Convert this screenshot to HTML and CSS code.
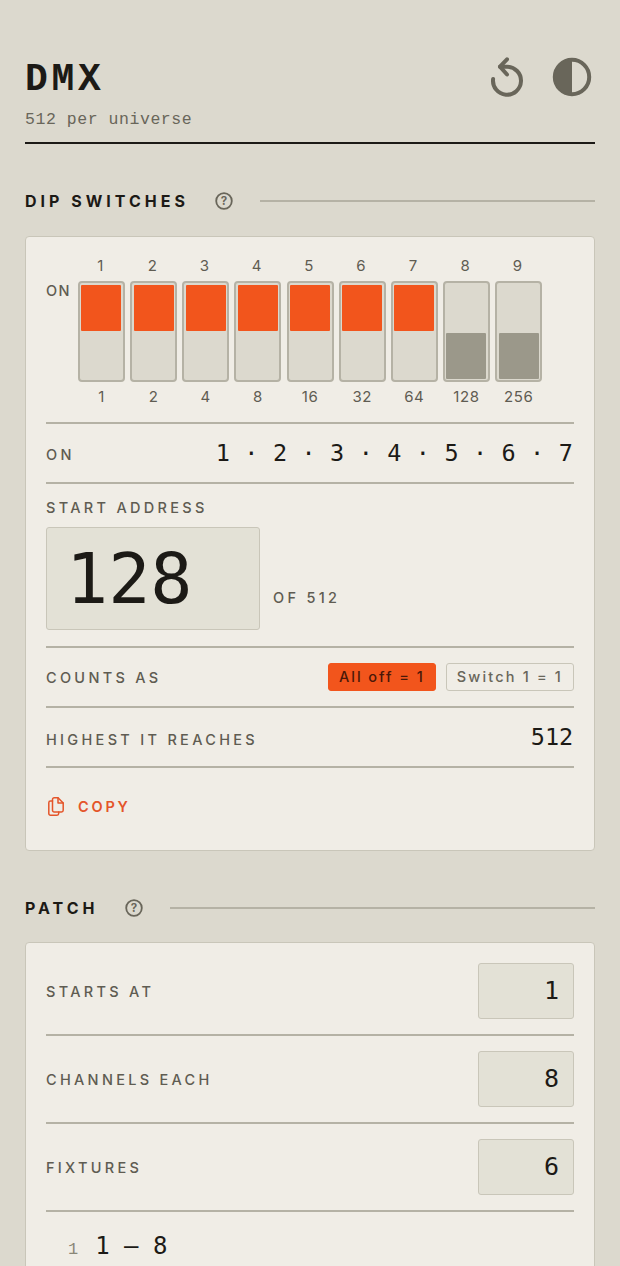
FILE: index.html
```html
<!DOCTYPE html>
<html lang="en">
<head>
  <meta charset="UTF-8">
  <title>DMX</title>
  <link rel="stylesheet" href="styles.css">
</head>
<body>
<div class="app">

  <!-- header -->
  <header class="top">
    <div>
      <h1>DMX</h1>
      <p class="sub">512 per universe</p>
    </div>
    <div class="top-btns">
      <svg class="ico" viewBox="0 0 40 40" fill="none" stroke="#69665a" stroke-width="4" stroke-linecap="round" stroke-linejoin="round"><path d="M12 9.700H19A14 14 0 1 1 5.100 22"/><path d="M19 2.300 12 9.700 19 17.500"/></svg>
      <svg class="ico" viewBox="0 0 40 40"><circle cx="20" cy="20" r="17.200" fill="none" stroke="#69665a" stroke-width="4"/><path d="M20 2.800a17.200 17.200 0 0 0 0 34.400z" fill="#69665a"/></svg>
    </div>
  </header>

  <!-- dip switches -->
  <div class="sec-head">
    <h2>DIP SWITCHES</h2>
    <svg class="help" viewBox="0 0 18 18"><circle cx="9" cy="9" r="7.800" fill="none" stroke="#69665a" stroke-width="1.800"/><text x="9" y="13" text-anchor="middle" class="help-q">?</text></svg>
    <span class="sec-line"></span>
  </div>

  <section class="card">
    <div class="dips">
      <div class="on-lbl">ON</div>
      <div class="dip"><span class="num">1</span><div class="sw"><i class="knob on"></i></div><span class="val">1</span></div>
      <div class="dip"><span class="num">2</span><div class="sw"><i class="knob on"></i></div><span class="val">2</span></div>
      <div class="dip"><span class="num">3</span><div class="sw"><i class="knob on"></i></div><span class="val">4</span></div>
      <div class="dip"><span class="num">4</span><div class="sw"><i class="knob on"></i></div><span class="val">8</span></div>
      <div class="dip"><span class="num">5</span><div class="sw"><i class="knob on"></i></div><span class="val">16</span></div>
      <div class="dip"><span class="num">6</span><div class="sw"><i class="knob on"></i></div><span class="val">32</span></div>
      <div class="dip"><span class="num">7</span><div class="sw"><i class="knob on"></i></div><span class="val">64</span></div>
      <div class="dip"><span class="num">8</span><div class="sw off"><i class="knob"></i></div><span class="val">128</span></div>
      <div class="dip"><span class="num">9</span><div class="sw off"><i class="knob"></i></div><span class="val">256</span></div>
    </div>

    <div class="row row-on">
      <span class="lbl">ON</span>
      <span class="on-list">1 · 2 · 3 · 4 · 5 · 6 · 7</span>
    </div>

    <div class="addr">
      <div class="lbl">START ADDRESS</div>
      <div class="addr-line">
        <div class="addr-box">128</div>
        <span class="lbl of">OF 512</span>
      </div>
    </div>

    <div class="row row-counts">
      <span class="lbl">COUNTS AS</span>
      <div class="pills">
        <span class="pill active">All off = 1</span>
        <span class="pill">Switch 1 = 1</span>
      </div>
    </div>

    <div class="row row-high">
      <span class="lbl">HIGHEST IT REACHES</span>
      <span class="mono-val">512</span>
    </div>

    <button class="copy">
      <svg viewBox="0 0 16 19" fill="none" stroke="#e4552a" stroke-width="1.500" stroke-linejoin="round" stroke-linecap="round"><path d="M4.500 4H2.500A1.700 1.700 0 0 0 .8 5.700V16.500A1.700 1.700 0 0 0 2.500 18.200H9A1.700 1.700 0 0 0 10.700 16.500V15"/><path d="M4.500 2.500A1.700 1.700 0 0 1 6.200 .8H10L15.200 6V13.300A1.700 1.700 0 0 1 13.500 15H6.200A1.700 1.700 0 0 1 4.500 13.300z"/><path d="M10 .8V6H15.200"/></svg>
      COPY
    </button>
  </section>

  <!-- patch -->
  <div class="sec-head">
    <h2>PATCH</h2>
    <svg class="help" viewBox="0 0 18 18"><circle cx="9" cy="9" r="7.800" fill="none" stroke="#69665a" stroke-width="1.800"/><text x="9" y="13" text-anchor="middle" class="help-q">?</text></svg>
    <span class="sec-line"></span>
  </div>

  <section class="card card-patch">
    <div class="row row-field">
      <span class="lbl">STARTS AT</span>
      <div class="field">1</div>
    </div>
    <div class="row row-field">
      <span class="lbl">CHANNELS EACH</span>
      <div class="field">8</div>
    </div>
    <div class="row row-field">
      <span class="lbl">FIXTURES</span>
      <div class="field">6</div>
    </div>
    <div class="fixture">
      <span class="fx-num">1</span>
      <span class="fx-range">1 – 8</span>
    </div>
  </section>

</div>
</body>
</html>
```

FILE: styles.css
```css
html,body{margin:0;height:1266px;overflow:hidden}
body{background:#dcd9ce;color:#1c1a16;font-family:"Inter","Liberation Sans",sans-serif}
.app{padding:57px 25px 0}

.top{display:flex;justify-content:space-between;align-items:flex-start;border-bottom:2px solid #1c1a16;height:85px}
h1{margin:0;font:700 38px/46px "Liberation Mono",monospace;letter-spacing:3.700px}
.sub{margin:7px 0 0;font:400 16.500px/20px "Liberation Mono",monospace;letter-spacing:.55px;color:#69665a}
.top-btns{display:flex;gap:24px;margin-top:0;margin-right:3px}
.ico{width:40px;height:40px;display:block}

.sec-head{display:flex;align-items:center;margin-top:47px;height:20px}
.sec-head h2{margin:0;font-size:16px;font-weight:700;letter-spacing:4px;line-height:20px}
.help{width:18px;height:18px;margin-left:26px;flex:none}
.help-q{font:700 11.500px "Inter",sans-serif;fill:#69665a}
.sec-line{flex:1;height:2px;background:#b5b2a5;margin-left:27px}

.card{margin-top:25px;background:#f0ede6;border:1px solid #c9c6b9;border-radius:4px;padding:19px 20px 4px}
.lbl{font-size:14.500px;font-weight:500;letter-spacing:3.300px;color:#5f5c52}

.dips{display:flex;gap:5.150px;padding-bottom:15px;border-bottom:2px solid #b5b2a5}
.on-lbl{width:26.850px;padding-top:26px;font-size:14.500px;font-weight:500;letter-spacing:1.500px;color:#5f5c52}
.dip{width:47px;display:flex;flex-direction:column;align-items:center}
.num,.val{font-size:15px;line-height:20px;color:#5f5c52;letter-spacing:.6px}
.num{padding-right:2px}
.sw{box-sizing:border-box;width:47px;height:101px;margin:5px 0;background:#dcd9ce;border:2px solid #b5b2a5;border-radius:4px;padding:1.500px;display:flex}
.sw.off{align-items:flex-end}
.knob{display:block;width:100%;height:46px;background:#9b988a;border-radius:1px}
.knob.on{background:#f2551c}

.row{display:flex;justify-content:space-between;align-items:center;border-bottom:2px solid #b5b2a5}
.row-on{height:58px}
.row-on .lbl{padding-top:3px}
.on-list{font:400 23.500px/30px "DejaVu Sans Mono",monospace;color:#1c1a16;letter-spacing:.14px;margin-right:1px}

.addr{padding:14px 0 16px;border-bottom:2px solid #b5b2a5}
.addr .lbl{display:block;line-height:20px}
.addr-line{display:flex;align-items:flex-end;gap:13px;margin-top:9px}
.addr-box{box-sizing:border-box;width:214px;height:103px;padding-left:19px;background:#e3e1d6;border:1px solid #c9c6b9;border-radius:3px;font:400 70px/103px "DejaVu Sans Mono",monospace}
.addr-line .of{line-height:20px;padding-bottom:22px}

.row-counts{height:58px}
.pills{display:flex;gap:10px}
.pill{box-sizing:border-box;height:28px;padding:0 10px;border:1px solid #c9c6b9;border-radius:3px;font-size:14.500px;font-weight:500;line-height:26px;letter-spacing:2.160px;color:#69665a}
.pill.active{background:#f2551c;border-color:#f2551c;color:#4a1808;letter-spacing:1.980px}

.row-high{height:58px}
.row-high .lbl{padding-top:5px}
.mono-val{font:400 23.500px/30px "DejaVu Sans Mono",monospace;letter-spacing:-.1px;margin-right:1px}

.copy{display:flex;align-items:center;gap:14px;background:none;border:0;padding:0 0 2px 2px;height:78px;font:600 14.500px "Inter",sans-serif;letter-spacing:2.800px;color:#e4552a}
.copy svg{width:16px;height:19px;display:block}

.card-patch{margin-top:24px;padding-top:5px;padding-bottom:0;height:400px}
.row-field{height:86px}
.field{box-sizing:border-box;width:96px;height:56px;padding-right:14px;background:#e3e1d6;border:1px solid #c9c6b9;border-radius:3px;text-align:right;font:400 25px/54px "DejaVu Sans Mono",monospace}
.fixture{display:flex;align-items:baseline;gap:17px;padding:18px 0 0 22px}
.fx-num{font:400 17px "Liberation Mono",monospace;color:#8a8778}
.fx-range{font:400 24px/32px "DejaVu Sans Mono",monospace}
```
